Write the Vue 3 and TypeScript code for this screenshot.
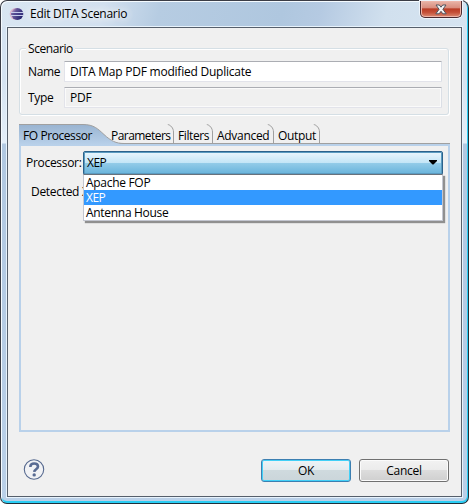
<script setup lang="ts">
import { ref } from 'vue'

interface Tab { label: string; width: number; spacing: number }

const name = ref('DITA Map PDF modified Duplicate')
const processors: string[] = ['Apache FOP', 'XEP', 'Antenna House']
const selected = ref('XEP')
const tabs: Tab[] = [
  { label: 'Parameters', width: 67, spacing: -0.55 },
  { label: 'Filters', width: 39, spacing: -0.4 },
  { label: 'Advanced', width: 61, spacing: -0.3 },
  { label: 'Output', width: 46, spacing: -0.35 },
]
</script>

<template>
  <div class="window">
    <header class="titlebar">
      <svg class="logo" width="15" height="14" viewBox="0 0 15 14">
        <defs>
          <linearGradient id="orb" x1="0" x2="1" y1="0" y2="0.5">
            <stop offset="0" stop-color="#e3b9cf" />
            <stop offset="0.4" stop-color="#66569a" />
            <stop offset="1" stop-color="#25246f" />
          </linearGradient>
        </defs>
        <ellipse cx="6.7" cy="7" rx="6" ry="6" fill="#dcb5cd" />
        <circle cx="8.3" cy="7" r="6" fill="url(#orb)" />
        <path d="M2 5.5H14M1.6 8.5H14" stroke="#c8cdec" stroke-width="1" />
        <path d="M2 7H14" stroke="#443f8a" stroke-width="1" />
      </svg>
      <h1 class="title"><span>Edit DITA Scenario</span></h1>
      <button class="close" aria-label="Close">
        <svg width="12" height="11" viewBox="0 0 12 11">
          <path d="M1 1H4.3L6 3.2L7.7 1H11L7.9 5.3L11.2 9.8H7.8L6 7.3L4.2 9.8H.8L4.1 5.3Z" fill="#f4f4f4" stroke="#50545e" stroke-width="1" />
        </svg>
      </button>
    </header>

    <main class="content">
      <section class="group">
        <h2 class="legend">Scenario</h2>
        <label class="field"><span class="caption name">Name</span><input v-model="name" class="input" spellcheck="false"></label>
        <label class="field"><span class="caption">Type</span><input class="input readonly" value="PDF" readonly></label>
      </section>

      <nav class="tabs">
        <div class="tab-active">
          <svg class="tab-shape" width="118" height="21" viewBox="0 0 118 21">
            <defs>
              <linearGradient id="tabfill" x1="0" x2="0" y1="0" y2="1">
                <stop offset="0" stop-color="#99b4d1" />
                <stop offset="1" stop-color="#b9d1ea" />
              </linearGradient>
            </defs>
            <path d="M0 .5H64C75 .5 79 5 85 10.5C92 17 97 19.5 105 19.5H118V21H0Z" fill="url(#tabfill)" />
            <path d="M0 .5H64C75 .5 79 5 85 10.5C92 17 97 19.5 105 19.5H118" fill="none" stroke="#a0a0a0" />
          </svg>
          <span class="tab-label">FO Processor</span>
        </div>
        <div v-for="t in tabs" :key="t.label" class="tab" :style="{ width: t.width + 'px', letterSpacing: t.spacing + 'px' }">
          <span>{{ t.label }}</span>
          <svg class="edge" width="8" height="20" viewBox="0 0 8 20">
            <path d="M.8 .5C3.5 1 6.5 4 6.5 8V20" fill="none" stroke="#a0a0a0" />
          </svg>
        </div>
      </nav>

      <section class="panel">
        <div class="row">
          <span class="processor">Processor:</span>
          <div class="combo">
            <span>{{ selected }}</span>
            <svg width="8" height="5" viewBox="0 0 8 5"><path d="M0 0H8V1L4.5 4.5H3.5L0 1Z" fill="#000" /></svg>
            <ul class="list">
              <li v-for="p in processors" :key="p" :class="{ on: p === selected }" @click="selected = p">{{ p }}</li>
            </ul>
          </div>
        </div>
        <p class="detected">Detected X</p>
      </section>

      <footer class="footer">
        <svg class="help" width="22" height="22" viewBox="0 0 22 22">
          <circle cx="11" cy="10.5" r="9.7" fill="#f1f2f5" stroke="#56698f" stroke-width="1.1" />
          <path d="M7.3 7.9C7.3 5.3 9 4.5 11.1 4.5C13.5 4.5 15 5.7 15 7.5C15 10.3 11.3 10.1 11.2 12.9" fill="none" stroke="#596b93" stroke-width="2.6" />
          <circle cx="11.2" cy="15.9" r="1.7" fill="#596b93" />
        </svg>
        <button class="btn primary">OK</button>
        <button class="btn">Cancel</button>
      </footer>
    </main>
  </div>
</template>

<style>
body { background: #fff; overflow: hidden; }
</style>

<style scoped>
* { box-sizing: border-box; margin: 0; }
.window {
  width: 469px; height: 504px; padding: 2px 5px 6px 6px;
  border: 1px solid #3b3d46; border-right-color: #20303a; border-bottom-color: #20303a;
  border-radius: 7px 8px 7px 7px;
  background:
    linear-gradient(105deg, #d9e6f2 0%, #d2e0ef 22%, #b6cce2 34%, #afc7df 60%, #b5cae2 68%, #d1e0ee 82%, #d6e4f1 100%) 0 0 / 100% 26px no-repeat,
    linear-gradient(180deg, #d5e3f1 0 80px, #e4eef8 142px, #b1c8e1 143px, #bad0e8 100%);
  box-shadow: inset 1px 1px 0 #f5fbff, inset -1px -1px 0 #2acdf4, inset 0 -2px 0 #2acdf4;
  font: 12px/15px "Open Sans", "Noto Sans", sans-serif; color: #000;
}
.titlebar { height: 24px; display: flex; align-items: flex-start; padding-left: 2px; }
.logo { margin-top: 4px; flex: none; }
.title { margin-left: 6px; padding-top: 3px; font-size: 12px; line-height: 15px; font-weight: 400; letter-spacing: -.27px; white-space: nowrap; flex: 1; text-shadow: 0 0 8px #fff, 0 0 8px #fff; }
.close {
  width: 42px; height: 17px; margin: -2px 1px 0 0; padding: 1px 0 0;
  display: flex; justify-content: center; align-items: center;
  border: 1px solid #4b2a2f; border-top: 0; border-radius: 0 0 5px 5px;
  background: linear-gradient(#e9b5a8 0, #d88b7c 45%, #b93c25 48%, #c44e36 70%, #db8b73 100%);
  box-shadow: inset 0 0 0 1px #edb5a9, 0 0 0 1px #eef4fa;
}
.content {
  width: 455px; height: 470px; padding: 17px 11px 0 11px;
  border: 1px solid #565f6b; background: #f0f0f0;
  box-shadow: 0 0 0 1px #e8f3fc;
  display: flex; flex-direction: column;
}
.group {
  width: 430px; height: 67px; margin-top: 3px; padding: 0 0 0 8px; border: 1px solid #d5dfe5; border-radius: 3px;
  box-shadow: inset 1px 1px 0 #fff, 1px 1px 0 #fff;
  display: flex; flex-direction: column;
}
.legend { align-self: flex-start; height: 15px; margin: -8px 0 5px -2px; padding: 0 2px; background: #f0f0f0; font-size: 12px; line-height: 15px; font-weight: 400; letter-spacing: -.42px; }
.field { display: flex; align-items: center; height: 21px; margin-bottom: 5px; flex: none; }
.caption { width: 36px; flex: none; letter-spacing: -.3px; }
.caption.name { letter-spacing: -.35px; }
.input {
  width: 378px; height: 21px; padding: 0 5px 1px; flex: none; outline: 0;
  border: 1px solid #e2e3ea; border-top-color: #abadb3; border-right-color: #dbdfe6; border-radius: 1px;
  background: #fff; font: inherit; color: inherit; letter-spacing: -.23px;
}
.readonly { background: #f0f0f0; box-shadow: inset 0 0 0 1px #fafafa; }
.tabs { width: 431px; height: 20px; margin-top: 9px; display: flex; border-bottom: 1px solid #a0a0a0; }
.tab-active { position: relative; width: 88px; flex: none; }
.tab-shape { position: absolute; left: 0; top: 0; }
.tab-label { position: absolute; left: 4px; top: 4px; white-space: nowrap; letter-spacing: -.42px; }
.tab { position: relative; height: 20px; padding: 4px 0 0 4px; white-space: nowrap; }
.edge { position: absolute; right: -1px; top: 0; }
.panel { width: 431px; height: 288px; border: 2px solid #b9d1ea; padding: 5px 5px 0; }
.row { display: flex; }
.processor { width: 57px; padding-top: 4px; letter-spacing: -.3px; }
.combo {
  position: relative; z-index: 1; width: 360px; height: 24px; padding: 0 5px 1px 3px;
  display: flex; justify-content: space-between; align-items: center;
  border: 1px solid #2c628b; border-radius: 2px; letter-spacing: -.5px;
  background: linear-gradient(#eaf6fd 0, #c3e5f6 50%, #92cbe8 52%, #68b3db 100%);
  box-shadow: inset 0 0 0 1px #5b9bc0;
}
.list {
  position: absolute; left: -1px; top: 22px; width: 360px; height: 47px; padding: 0;
  list-style: none; background: #fff; border: 1px solid #c3c6d0; border-top-color: #68727c;
  box-shadow: 2px 2px 1px #909090;
}
.list li { height: 15px; line-height: 15px; padding-left: 2px; letter-spacing: -.3px; }
.list .on { background: #3399ff; color: #fff; letter-spacing: -.5px; }
.detected { margin: 9px 0 0 5px; white-space: nowrap; letter-spacing: -.3px; }
.footer { width: 430px; height: 24px; margin-top: 27px; display: flex; gap: 8px; }
.help { margin: 0 auto 0 4px; }
.btn {
  width: 90px; height: 23px; padding: 0 0 1px; border: 1px solid #707070; border-radius: 3px;
  background: linear-gradient(#f2f2f2 0, #ebebeb 48%, #dcdcdc 50%, #cfcfcf 100%);
  box-shadow: inset 0 0 0 1px #fbfbfb; font: inherit; color: #000; letter-spacing: -.25px;
}
.primary { border-color: #3c7fb1; box-shadow: inset 0 0 0 1px #42d0f7; background: linear-gradient(#eef4f7 0, #e3ebee 48%, #cfdade 50%, #cbd5da 100%); }
</style>
